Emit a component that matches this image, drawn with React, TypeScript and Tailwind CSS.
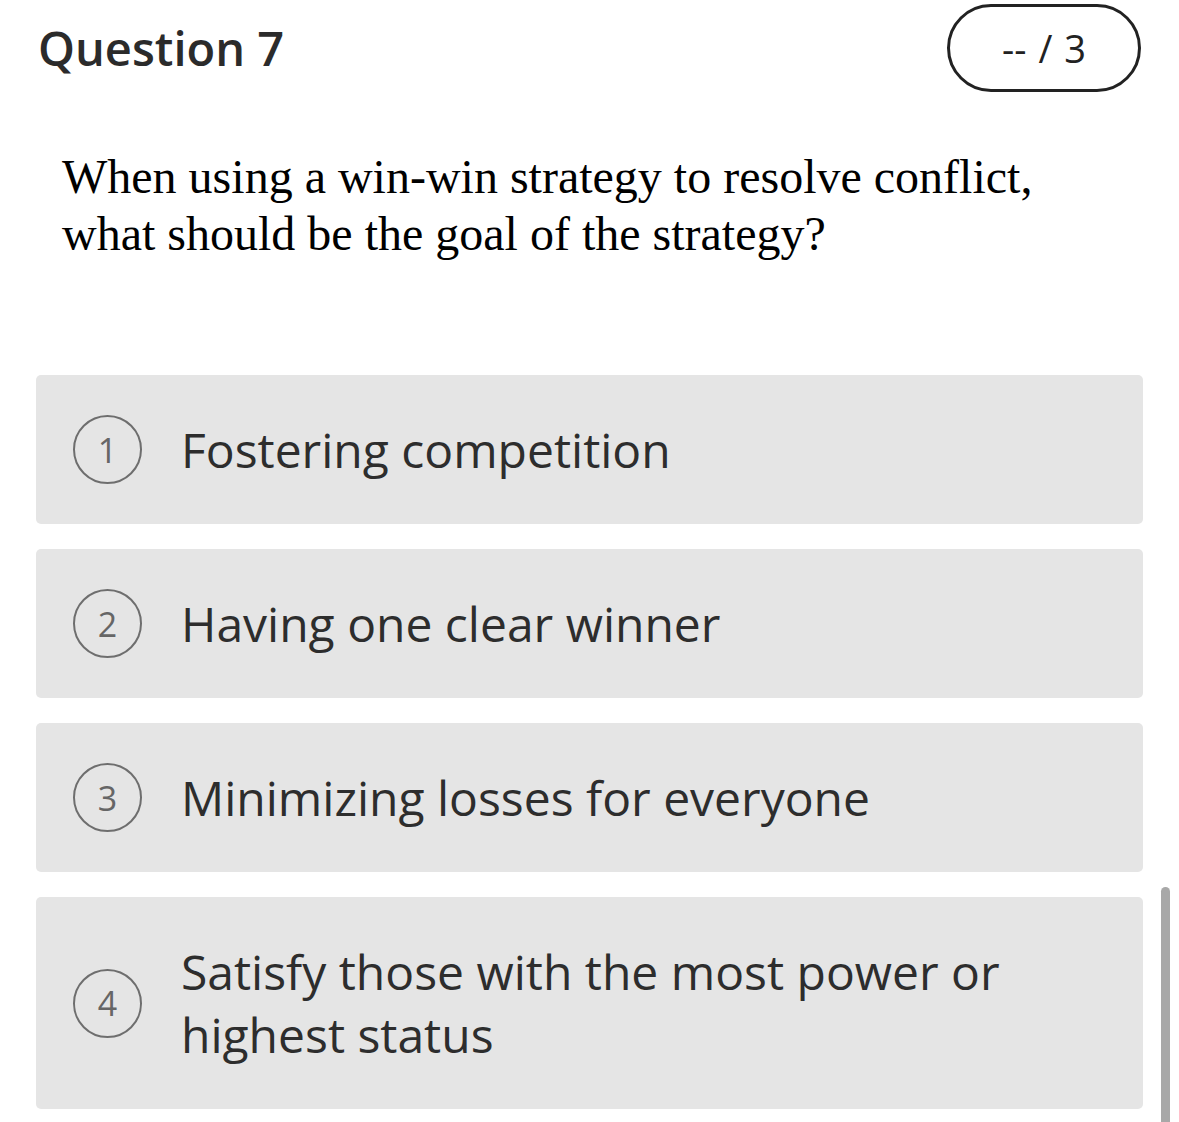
import React from "react";

const options = [
  { n: 1, text: "Fostering competition" },
  { n: 2, text: "Having one clear winner" },
  { n: 3, text: "Minimizing losses for everyone" },
  { n: 4, text: "Satisfy those with the most power or highest status" },
];

export default function App() {
  return (
    <div className="relative min-h-[1122px] bg-white px-[36px] pb-[40px] font-['Open_Sans',sans-serif]">
      <div className="flex h-[92px] items-end justify-between pt-[4px]">
        <div className="flex h-[88px] w-full items-center justify-between">
          <h1 className="ml-[2px] text-[47px] font-semibold leading-none text-[#2b2b2b]">Question 7</h1>
          <div className="mr-[2px] flex h-[88px] w-[194px] items-center justify-center rounded-full border-[3px] border-[#222]">
            <span className="text-[38px] leading-none text-[#222] [word-spacing:2px]">-- / 3</span>
          </div>
        </div>
      </div>

      <p className="mt-[56px] pl-[26px] font-['Liberation_Serif',serif] text-[48px] leading-[57px] text-black">
        When using a win-win strategy to resolve conflict,
        <br />
        what should be the goal of the strategy?
      </p>

      <div className="mt-[113px] flex flex-col gap-[25px]">
        {options.map((o) => (
          <div
            key={o.n}
            className="flex items-center rounded-[5px] bg-[#e5e5e5] py-[38px] pl-[37px] pr-[60px]"
          >
            <div className="flex h-[69px] w-[69px] shrink-0 items-center justify-center rounded-full border-2 border-[#6e6e6e]">
              <span className="text-[34px] leading-none text-[#666]">{o.n}</span>
            </div>
            <div className="ml-[39px] max-w-[860px] py-[5px] text-[48px] leading-[63px] text-[#2d2d2d]">{o.text}</div>
          </div>
        ))}
      </div>

      <div className="absolute left-[1161px] top-[887px] h-[235px] w-[9px] rounded-t-full bg-[#a8a8a8]" />
    </div>
  );
}
